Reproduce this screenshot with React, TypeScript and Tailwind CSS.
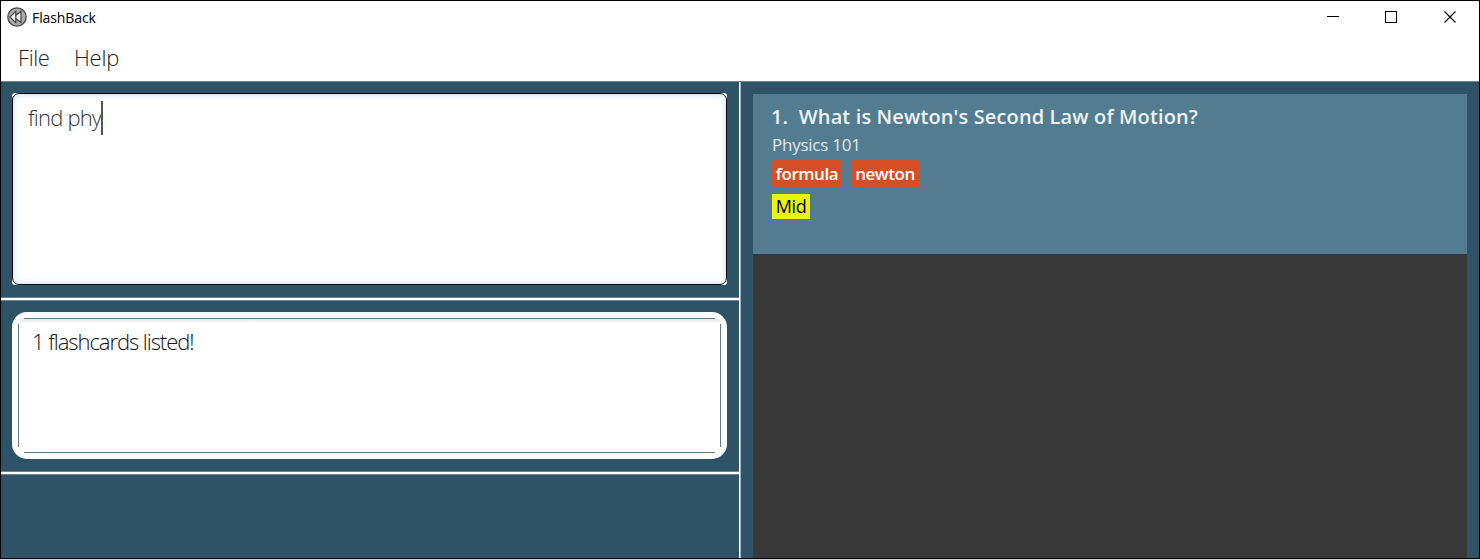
import React from 'react';

function RewindLogo() {
  return (
    <svg className="h-5 w-5" viewBox="0 0 20 20" fill="none">
      <circle cx="10" cy="10" r="9.2" fill="#acacac" stroke="#474747" strokeWidth="1.3" />
      <path d="M8.800 4.400 2.800 10l6 5.600v-3.800l5.200 3.800V4.400L8.800 8.200z" fill="#f4f4f4" stroke="#444" strokeWidth="1.200" />
      <path d="M8.800 8v4" stroke="#444" strokeWidth="1.200" />
    </svg>
  );
}

function TitleBar() {
  return (
    <div className="flex h-8 items-center justify-between pl-[6px]">
      <div className="flex items-center gap-[5px]">
        <RewindLogo />
        <span className="pt-px text-[14px] leading-5 tracking-[-0.1px] text-black">FlashBack</span>
      </div>
      <svg className="h-8 w-[175px]" viewBox="0 0 175 32" fill="none" stroke="#000" shapeRendering="crispEdges">
        <path d="M23 15.500h12" />
        <path d="M81.500 10.500h11v11h-11z" />
        <path d="M140.500 10.500l11 11M151.500 10.500l-11 11" shapeRendering="auto" strokeWidth="1.100" />
      </svg>
    </div>
  );
}

function MenuBar() {
  return (
    <div className="flex h-12 items-center gap-6 pl-[17px] text-[22px] font-light text-[#222]">
      <span className="w-8 tracking-[-0.4px]">File</span>
      <span className="tracking-[-0.2px]">Help</span>
    </div>
  );
}

function Tag({ className, children }: { className: string; children: React.ReactNode }) {
  return (
    <span className={`flex h-7 items-center justify-center rounded-[3px] bg-[#d64e26] text-[17px] font-semibold tracking-[-0.45px] text-white ${className}`}>
      {children}
    </span>
  );
}

export default function App() {
  return (
    <div className="flex h-[559px] w-[1480px] flex-col overflow-hidden border border-black bg-white font-['Open_Sans','Noto_Sans',sans-serif]">
      <TitleBar />
      <MenuBar />
      <div className="flex min-h-0 flex-1 border-t border-[#72858f] bg-[#2f5366]">
        <div className="flex w-[738px] flex-col">
          <div className="h-[215px] pt-[11px] pl-[11px]">
            <div className="h-[192px] w-[715px] rounded-[3px] bg-white">
              <div className="flex h-[192px] items-start rounded-[7px] border border-black bg-white pt-[7px] pl-[15px] shadow-[inset_0_0_5px_2px_#d5eaf2]">
                <span className="-mt-px text-[22px] leading-[34px] font-light tracking-[-0.8px] whitespace-nowrap text-[#333]">find phy</span>
                <span className="h-[34px] w-[2px] bg-[#555]" />
              </div>
            </div>
          </div>
          <div className="h-1 shrink-0 border-y border-[#6c8594] bg-white" />
          <div className="h-[170px] pt-[11px] pl-[11px]">
            <div className="h-[147px] w-[715px] rounded-[15px] bg-white p-[6px]">
              <div className="flex h-[135px] flex-col">
                <div className="mx-[6px] h-px bg-[#587b8d]" />
                <div className="mx-px h-[5px] bg-linear-to-b from-[#e8e8e8] to-white" />
                <div className="flex-1 border-x border-[#587b8d] pl-[13px]">
                  <span className="text-[22px] leading-[34px] font-light tracking-[-1.05px] whitespace-nowrap text-[#111]">1 flashcards listed!</span>
                </div>
                <div className="h-[5px]" />
                <div className="mx-[6px] h-px bg-[#587b8d]" />
              </div>
            </div>
          </div>
          <div className="h-1 shrink-0 border-y border-[#6c8594] bg-white" />
        </div>
        <div className="w-[2px] border-r border-[#a5b5be] bg-white" />
        <div className="flex flex-1 pt-3 pr-3 pl-3">
          <div className="flex-1 bg-[#383838]">
            <div className="h-[160px] bg-[#547c90] pt-[9px] pl-[19px]">
              <h1 className="-ml-px text-[20px] leading-[28px] font-semibold tracking-[0.12px] whitespace-pre text-[#eef3f6]">1.  What is Newton's Second Law of Motion?</h1>
              <p className="text-[17px] leading-[28px] tracking-[-0.25px] text-[#e0e8ee]">Physics 101</p>
              <div className="mt-[1px] flex gap-[9px]">
                <Tag className="w-[70px]">formula</Tag>
                <Tag className="w-[68px]">newton</Tag>
              </div>
              <div className="mt-[6px] flex h-[25px] w-[38px] items-center justify-center bg-[#edf20d] text-[18px] tracking-[-0.4px] text-black">Mid</div>
            </div>
          </div>
        </div>
      </div>
    </div>
  );
}
